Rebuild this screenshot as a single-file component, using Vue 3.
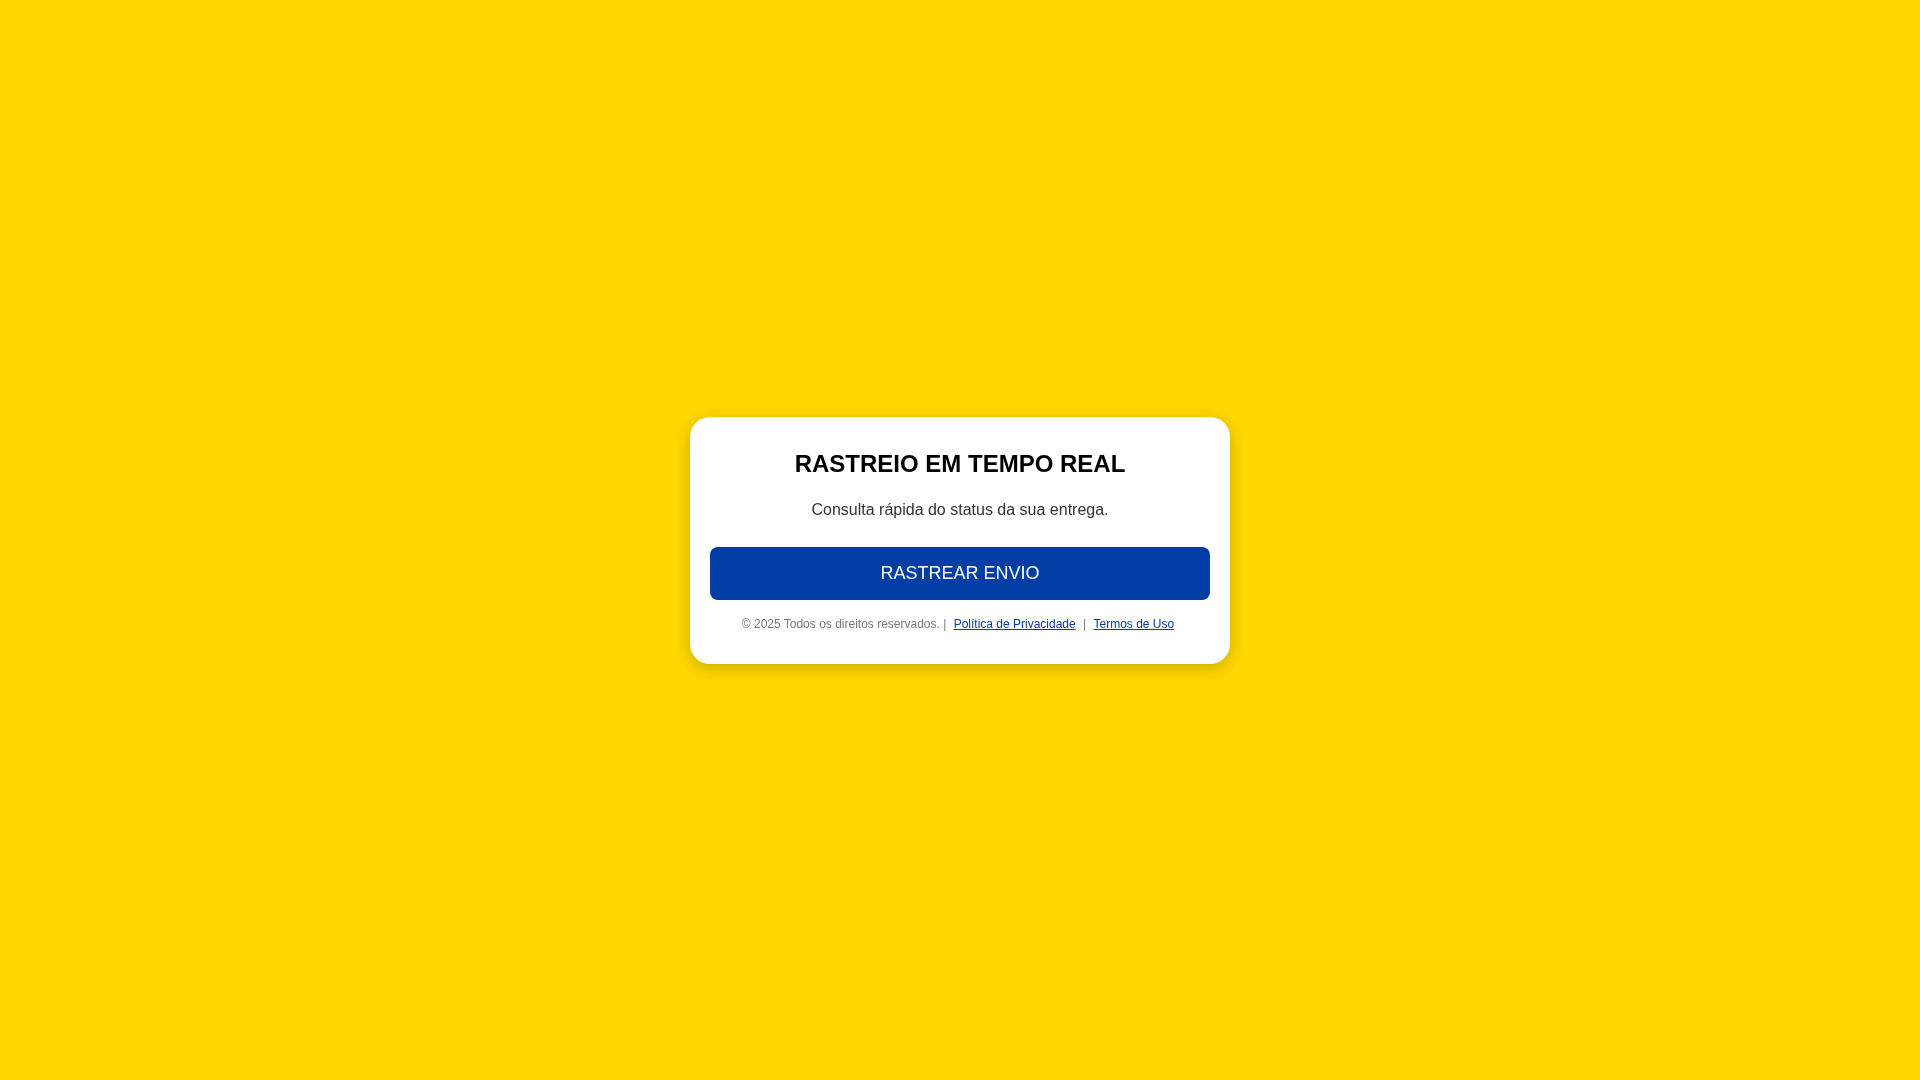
<!-- App.vue -->
<script setup>
const year = 2025

const handleTrack = () => {
  console.log('rastrear')
}
</script>

<template>
  <div class="page">
    <main class="card">
      <h1>RASTREIO EM TEMPO REAL</h1>
      <p class="subtitle">Consulta rápida do status da sua entrega.</p>
      <button type="button" class="track-button" @click="handleTrack">RASTREAR ENVIO</button>
      <footer class="footer">
        © {{ year }} Todos os direitos reservados. |
        <a href="#privacidade">Política de Privacidade</a> |
        <a href="#termos">Termos de Uso</a>
      </footer>
    </main>
  </div>
</template>

<style>
body {
  margin: 0;
  background: #ffd700;
}
</style>

<style scoped>
.page {
  display: flex;
  justify-content: center;
  align-items: center;
  min-height: 100vh;
  font-family: Arial, "Liberation Sans", sans-serif;
}

.card {
  box-sizing: border-box;
  width: 100%;
  max-width: 540px;
  padding: 32px 20px;
  background: #fff;
  border-radius: 20px;
  box-shadow: 0 4px 16px rgba(0, 0, 0, 0.2);
  text-align: center;
  will-change: transform;
}

h1 {
  margin: 0 0 20px;
  font-size: 24px;
  line-height: 30px;
  color: #000;
}

.subtitle {
  margin: 0 0 26px;
  font-size: 16px;
  line-height: 22px;
  color: #333;
}

.track-button {
  display: block;
  width: 100%;
  padding: 16px;
  border: none;
  border-radius: 8px;
  background: #003da5;
  color: #fff;
  font-family: inherit;
  font-size: 18px;
  line-height: 21px;
  cursor: pointer;
}

.track-button:hover {
  background: #002f80;
}

.footer {
  margin-top: 16px;
  font-size: 12px;
  line-height: 16px;
  color: #777;
}

.footer a {
  margin: 0 4px;
  color: #003da5;
  text-decoration: underline;
}
</style>
